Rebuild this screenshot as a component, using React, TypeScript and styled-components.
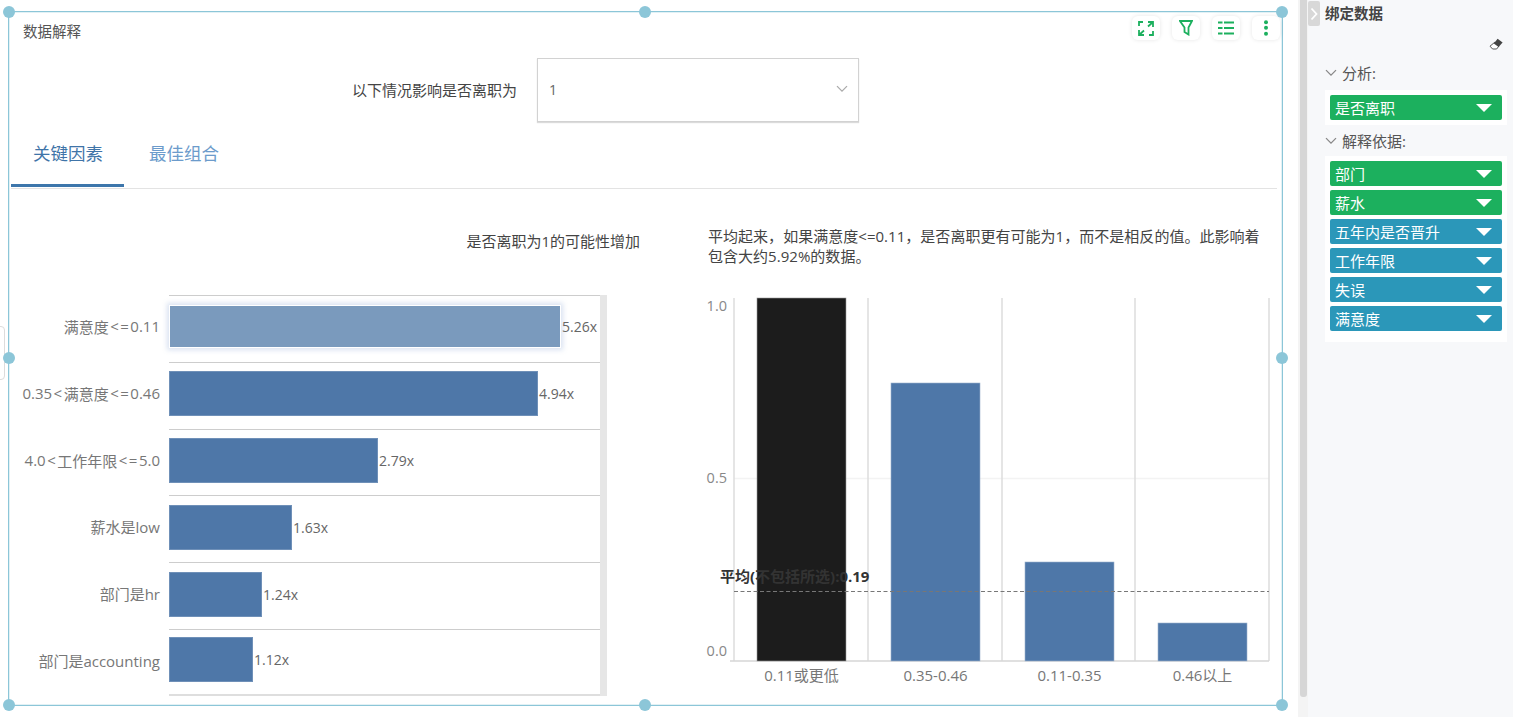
import React from "react";
import styled, { createGlobalStyle } from "styled-components";

const GlobalStyle = createGlobalStyle`
  html, body {
    margin: 0;
    padding: 0;
    height: 100%;
    overflow: hidden;
    background: #ffffff;
  }
  * {
    box-sizing: border-box;
  }
  body {
    font-family: "Open Sans", "Noto Sans CJK SC", sans-serif;
    font-size: 15px;
    color: #444;
  }
`;

const Page = styled.div`
  display: flex;
  width: 1513px;
  height: 717px;
  overflow: hidden;
`;

const Canvas = styled.div`
  position: relative;
  flex: 0 0 1298px;
  padding: 11px 0 0 8px;
`;

const SideTab = styled.div`
  position: absolute;
  left: -6px;
  top: 326px;
  width: 11px;
  height: 54px;
  background: #fff;
  border: 1px solid #dcdcdc;
  border-radius: 4px;
`;

const Frame = styled.div`
  position: relative;
  width: 1275px;
  height: 695px;
  border: 1px solid #8cc6d8;
  box-shadow: inset 0 0 0 1px rgba(140, 198, 216, 0.25);
`;

const Handle = styled.span<{ $x: string; $y: string }>`
  position: absolute;
  left: ${(p) => p.$x};
  top: ${(p) => p.$y};
  width: 12px;
  height: 12px;
  margin: -6.5px 0 0 -6.5px;
  border-radius: 50%;
  background: #8cc6d8;
`;

const TitleBar = styled.div`
  display: flex;
  justify-content: space-between;
  height: 46px;
  padding: 4px 2px 0 14px;
`;

const Title = styled.div`
  font-size: 14.5px;
  line-height: 28px;
  margin-top: 2px;
  color: #555;
`;

const Toolbar = styled.div`
  display: flex;
  gap: 12px;
`;

const ToolButton = styled.button`
  display: flex;
  align-items: center;
  justify-content: center;
  width: 28px;
  height: 24px;
  padding: 0;
  border: none;
  border-radius: 6px;
  background: #fff;
  box-shadow: 0 0 4px rgba(0, 0, 0, 0.1);
`;

const SelectRow = styled.div`
  display: flex;
  align-items: center;
  gap: 20px;
  height: 64px;
`;

const SelectLabel = styled.div`
  width: 508px;
  padding-bottom: 2px;
  text-align: right;
  color: #444;
`;

const SelectBox = styled.div`
  display: flex;
  align-items: center;
  justify-content: space-between;
  width: 322px;
  height: 64px;
  padding: 0 10px 2px 11px;
  border: 1px solid #d2d2d2;
  box-shadow: 0 1px 1px rgba(0, 0, 0, 0.14);
  color: #666;
  font-size: 14px;
`;

const Tabs = styled.div`
  display: flex;
  height: 67px;
  margin: 0 5px 0 2px;
  border-bottom: 1px solid #e3e3e3;
`;

const Tab = styled.div<{ $active?: boolean }>`
  width: ${(p) => (p.$active ? "113px" : "auto")};
  height: 65px;
  margin-left: ${(p) => (p.$active ? "0" : "25px")};
  padding-left: ${(p) => (p.$active ? "22px" : "0")};
  font-size: 17.5px;
  line-height: 62px;
  white-space: nowrap;
  color: ${(p) => (p.$active ? "#3f74a8" : "#6c9bcb")};
  border-bottom: ${(p) => (p.$active ? "3px solid #3d76ab" : "none")};
`;

const Body = styled.div`
  display: flex;
`;

const LeftPanel = styled.div`
  flex: 0 0 631px;
`;

const LeftTitle = styled.div`
  height: 106px;
  padding-top: 40px;
  line-height: 24px;
  text-align: right;
  color: #444;
`;

const BarChart = styled.div`
  display: flex;
  width: 598px;
  height: 401px;
`;

const Rows = styled.div`
  display: flex;
  flex-direction: column;
  flex: 1;
`;

const BarRow = styled.div`
  display: flex;
  flex: 1;
`;

const BarLabel = styled.div`
  flex: 0 0 160px;
  padding: 0 9px 4px 0;
  display: flex;
  align-items: center;
  justify-content: flex-end;
  color: #777;
  white-space: nowrap;
`;

const Op = styled.span`
  margin-left: 1.5px;
  letter-spacing: 1.5px;
`;

const BarTrack = styled.div<{ $last?: boolean }>`
  flex: 1;
  display: flex;
  align-items: center;
  padding-bottom: ${(p) => (p.$last ? "6px" : "4px")};
  border-top: 1px solid #cdcdcd;
  border-bottom: ${(p) => (p.$last ? "2px solid #dedede" : "none")};
`;

const Bar = styled.div<{ $highlight?: boolean }>`
  height: ${(p) => (p.$highlight ? "43px" : "45px")};
  background: ${(p) => (p.$highlight ? "#7a9abd" : "#4e77a8")};
  border: 1px solid ${(p) => (p.$highlight ? "#fff" : "#6f90b8")};
  box-shadow: ${(p) => (p.$highlight ? "0 0 5px 2px rgba(170, 190, 225, 0.45)" : "none")};
`;

const BarValue = styled.span`
  margin-left: 1px;
  font-size: 14px;
  color: #666;
`;

const ChartScroll = styled.div`
  flex: 0 0 7px;
  background: #e6e6e6;
`;

const RightPanel = styled.div`
  flex: 1;
  padding: 37px 0 0 68px;
`;

const Explain = styled.div`
  width: 560px;
  line-height: 20px;
  letter-spacing: 0.03px;
  color: #444;
`;

const ColumnChart = styled.svg`
  display: block;
  margin: 24px 0 0 -8px;
`;

const Track = styled.div`
  flex: 0 0 10px;
  padding-left: 2px;
  background: #f4f4f4;
`;

const Thumb = styled.div`
  width: 7px;
  height: 697px;
  background: #d6d6d6;
  border-radius: 0 0 3px 3px;
`;

const Sidebar = styled.aside`
  position: relative;
  flex: 1;
  padding: 0 6px 0 17px;
  background: #f7f8fa;
`;

const Collapse = styled.div`
  position: absolute;
  left: 0;
  top: 1px;
  display: flex;
  align-items: center;
  justify-content: center;
  width: 12px;
  height: 25px;
  background: #d8d8d8;
  border-radius: 2px;
`;

const SideTitle = styled.div`
  height: 26px;
  line-height: 28px;
  font-weight: 700;
  font-size: 14.5px;
  color: #444;
`;

const EraserRow = styled.div`
  display: flex;
  justify-content: flex-end;
  align-items: center;
  height: 36px;
  padding-right: 4px;
`;

const SectionHead = styled.div<{ $pad: number }>`
  display: flex;
  align-items: center;
  gap: 5px;
  height: 28px;
  padding-bottom: ${(p) => p.$pad}px;
  color: #555;
`;

const FieldBox = styled.div<{ $bottom: number }>`
  display: flex;
  flex-direction: column;
  gap: 4px;
  padding: 5px 5px ${(p) => p.$bottom}px;
  margin-bottom: 3px;
  background: #fff;
`;

const Pill = styled.div<{ $kind: "dim" | "val" }>`
  display: flex;
  align-items: center;
  justify-content: space-between;
  height: 25px;
  padding: 0 10px 0 5px;
  border-radius: 2px;
  color: #fff;
  background: ${(p) => (p.$kind === "dim" ? "#1cb05e" : "#2b97b9")};
`;

const Triangle = styled.span`
  width: 0;
  height: 0;
  border-left: 8px solid transparent;
  border-right: 8px solid transparent;
  border-top: 8px solid #fff;
`;

const GREEN = "#1cb05e";

const ExpandIcon = () => (
  <svg width="16" height="15" viewBox="0 0 16 15" fill="none" stroke={GREEN} strokeWidth="1.8">
    <path d="M1 5V1h4" />
    <path d="M15 10v4h-4" />
    <path d="M10 1h5v5M15 1l-5 4.5" />
    <path d="M1 9v5h5M1 14l5-4.5" />
  </svg>
);

const FilterIcon = () => (
  <svg width="14" height="16" viewBox="0 0 14 16" fill="none" stroke={GREEN} strokeWidth="1.8">
    <path d="M1 1h12L9.5 7.5V14.5L5.5 12V7.5z" strokeLinejoin="miter" />
  </svg>
);

const ListIcon = () => (
  <svg width="16" height="14" viewBox="0 0 16 14" fill={GREEN}>
    <rect x="0" y="0.5" width="4.5" height="2" />
    <rect x="6" y="0.5" width="10" height="2" />
    <rect x="0" y="6" width="4.5" height="2" />
    <rect x="6" y="6" width="10" height="2" />
    <rect x="0" y="11.5" width="4.5" height="2" />
    <rect x="6" y="11.5" width="10" height="2" />
  </svg>
);

const MoreIcon = () => (
  <svg width="6" height="16" viewBox="0 0 6 16" fill={GREEN}>
    <circle cx="3" cy="2.2" r="2" />
    <circle cx="3" cy="7.8" r="2" />
    <circle cx="3" cy="13.8" r="2" />
  </svg>
);

const Chevron = ({ color = "#888", size = 12 }: { color?: string; size?: number }) => (
  <svg width={size} height={size * 0.6} viewBox="0 0 12 7" fill="none" stroke={color} strokeWidth="1.3">
    <path d="M1 1l5 5 5-5" />
  </svg>
);

const EraserIcon = () => (
  <svg width="14" height="12" viewBox="0 0 14 12">
    <path d="M6 4L1 8.2 3.6 11h4L10 8z" fill="#fff" stroke="#555" strokeWidth="1" />
    <path d="M8.6 .8L13.6 4.4 9.6 9 4.8 5.4z" fill="#444" />
  </svg>
);

function withOps(label: string) {
  return label.split(/(<=|<)/).map((part, i) => (i % 2 === 1 ? <Op key={i}>{part}</Op> : part));
}

const bars = [
  { label: "满意度<=0.11", width: 392, value: "5.26x", highlight: true },
  { label: "0.35<满意度<=0.46", width: 369, value: "4.94x" },
  { label: "4.0<工作年限<=5.0", width: 209, value: "2.79x" },
  { label: "薪水是low", width: 123, value: "1.63x" },
  { label: "部门是hr", width: 93, value: "1.24x" },
  { label: "部门是accounting", width: 84, value: "1.12x" },
];

const columns = [
  { x: 757, top: 298, fill: "#1c1c1c", label: "0.11或更低" },
  { x: 891, top: 383, fill: "#4e77a8", label: "0.35-0.46" },
  { x: 1025, top: 562, fill: "#4e77a8", label: "0.11-0.35" },
  { x: 1158, top: 623, fill: "#4e77a8", label: "0.46以上" },
];

const handles = [
  ["0", "0"],
  ["50%", "0"],
  ["100%", "0"],
  ["0", "50%"],
  ["100%", "50%"],
  ["0", "100%"],
  ["50%", "100%"],
  ["100%", "100%"],
];

const fields: { name: string; kind: "dim" | "val" }[] = [
  { name: "部门", kind: "dim" },
  { name: "薪水", kind: "dim" },
  { name: "五年内是否晋升", kind: "val" },
  { name: "工作年限", kind: "val" },
  { name: "失误", kind: "val" },
  { name: "满意度", kind: "val" },
];

function Columns() {
  const base = 661;
  return (
    <ColumnChart width="575" height="400" viewBox="700 290 575 400" fontFamily='"Open Sans", "Noto Sans CJK SC", sans-serif'>
      <line x1="734" x2="1269" y1="478.5" y2="478.5" stroke="#f3f3f3" strokeWidth="1.5" />
      {[734, 868, 1002, 1135, 1269].map((x) => (
        <line key={x} x1={x} x2={x} y1="298" y2={base} stroke="#dcdcdc" strokeWidth="1.5" />
      ))}
      <line x1="730" x2="1269" y1={base} y2={base} stroke="#d6d6d6" strokeWidth="1.5" />
      {columns.map((c) => (
        <g key={c.label}>
          <rect x={c.x} y={c.top} width="89" height={base - c.top} fill={c.fill} stroke={c.fill === "#1c1c1c" ? "#999" : "#9db3cc"} strokeWidth="0.6" />
          <text x={c.x + 44.5} y="681" textAnchor="middle" fontSize="15" fill="#777">
            {c.label}
          </text>
        </g>
      ))}
      {[
        ["1.0", 311],
        ["0.5", 483],
        ["0.0", 656],
      ].map(([t, y]) => (
        <text key={t} x="727" y={y} textAnchor="end" fontSize="14.5" fill="#888">
          {t}
        </text>
      ))}
      <line x1="734" x2="1269" y1="591.5" y2="591.5" stroke="#777" strokeWidth="1" strokeDasharray="4 2.5" />
      <text x="720" y="582" fontSize="15" fontWeight="700" fill="#333">
        平均(不包括所选):0.19
      </text>
    </ColumnChart>
  );
}

export default function App() {
  return (
    <Page>
      <GlobalStyle />
      <Canvas>
        <SideTab />
        <Frame>
          {handles.map(([x, y]) => (
            <Handle key={x + y} $x={x} $y={y} />
          ))}
          <TitleBar>
            <Title>数据解释</Title>
            <Toolbar>
              <ToolButton><ExpandIcon /></ToolButton>
              <ToolButton><FilterIcon /></ToolButton>
              <ToolButton><ListIcon /></ToolButton>
              <ToolButton><MoreIcon /></ToolButton>
            </Toolbar>
          </TitleBar>
          <SelectRow>
            <SelectLabel>以下情况影响是否离职为</SelectLabel>
            <SelectBox>
              1
              <Chevron color="#aaa" />
            </SelectBox>
          </SelectRow>
          <Tabs>
            <Tab $active>关键因素</Tab>
            <Tab>最佳组合</Tab>
          </Tabs>
          <Body>
            <LeftPanel>
              <LeftTitle>是否离职为1的可能性增加</LeftTitle>
              <BarChart>
                <Rows>
                  {bars.map((b, i) => (
                    <BarRow key={b.label}>
                      <BarLabel>{withOps(b.label)}</BarLabel>
                      <BarTrack $last={i === bars.length - 1}>
                        <Bar $highlight={b.highlight} style={{ width: b.width }} />
                        <BarValue>{b.value}</BarValue>
                      </BarTrack>
                    </BarRow>
                  ))}
                </Rows>
                <ChartScroll />
              </BarChart>
            </LeftPanel>
            <RightPanel>
              <Explain>
                平均起来，如果满意度&lt;=0.11，是否离职更有可能为1，而不是相反的值。此影响着包含大约5.92%的数据。
              </Explain>
              <Columns />
            </RightPanel>
          </Body>
        </Frame>
      </Canvas>
      <Track>
        <Thumb />
      </Track>
      <Sidebar>
        <Collapse>
          <svg width="8" height="14" viewBox="0 0 8 14" fill="none" stroke="#fff" strokeWidth="1.8">
            <path d="M1.5 1.5L6.5 7l-5 5.5" />
          </svg>
        </Collapse>
        <SideTitle>绑定数据</SideTitle>
        <EraserRow>
          <EraserIcon />
        </EraserRow>
        <SectionHead $pad={7}>
          <Chevron />
          分析:
        </SectionHead>
        <FieldBox $bottom={5}>
          <Pill $kind="dim">
            是否离职
            <Triangle />
          </Pill>
        </FieldBox>
        <SectionHead $pad={3}>
          <Chevron />
          解释依据:
        </SectionHead>
        <FieldBox $bottom={11}>
          {fields.map((f) => (
            <Pill key={f.name} $kind={f.kind}>
              {f.name}
              <Triangle />
            </Pill>
          ))}
        </FieldBox>
      </Sidebar>
    </Page>
  );
}
